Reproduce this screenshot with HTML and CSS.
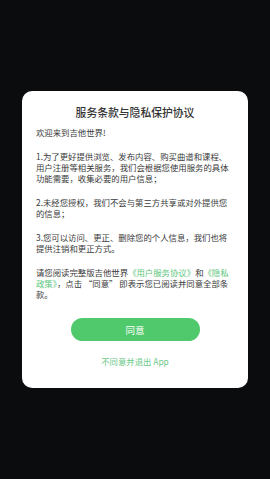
FILE: index.html
```html
<!DOCTYPE html>
<html lang="zh">
<head>
<meta charset="utf-8">
<link rel="stylesheet" href="styles.css">
</head>
<body>
<div class="screen">
  <div class="card">
    <h1 class="title">服务条款与隐私保护协议</h1>
    <div class="body">
      <p>欢迎来到吉他世界!</p>
      <p>1.为了更好提供浏览、发布内容、购买曲谱和课程、用户注册等相关服务，我们会根据您使用服务的具体功能需要，收集必要的用户信息；</p>
      <p>2.未经您授权，我们不会与第三方共享或对外提供您的信息；</p>
      <p>3.您可以访问、更正、删除您的个人信息，我们也将提供注销和更正方式。</p>
      <p>请您阅读完整版吉他世界<span class="link">《用户服务协议》</span>和<span class="link">《隐私政策》</span>，点击 “同意” 即表示您已阅读并同意全部条款。</p>
    </div>
    <div class="actions">
      <button class="agree">同意</button>
      <div class="decline">不同意并退出 App</div>
    </div>
  </div>
</div>
</body>
</html>
```
FILE: styles.css
```css
html, body {
  margin: 0;
  padding: 0;
  background: #0b0c0e;
  font-family: "Noto Sans CJK SC", "Noto Sans", sans-serif;
}
.screen {
  width: 270px;
  height: 479px;
  padding-top: 91px;
  box-sizing: border-box;
}
.card {
  margin: 0 22px;
  width: 226px;
  background: #ffffff;
  border-radius: 10px;
  padding: 14px 14px 20px;
  box-sizing: border-box;
}
.title {
  margin: 0;
  font-size: 10.8px;
  line-height: 14px;
  font-weight: 500;
  color: #333333;
  text-align: center;
}
.body {
  margin-top: 8px;
  color: #3a3a3a;
  font-size: 8.4px;
  line-height: 11.33px;
}
.body p {
  margin: 0 0 12.3px;
}
.body p:last-child {
  margin-bottom: 0;
}
.link {
  color: #5cc67c;
}
.actions {
  margin-top: 17px;
  display: flex;
  flex-direction: column;
  align-items: center;
}
.agree {
  width: 129px;
  height: 23.5px;
  border: none;
  border-radius: 12px;
  background: #4fc96c;
  color: #ffffff;
  font-family: inherit;
  font-size: 9.5px;
  padding: 0;
}
.decline {
  margin-top: 15px;
  color: #6cc98a;
  font-size: 8.4px;
  line-height: 11.33px;
}
```
